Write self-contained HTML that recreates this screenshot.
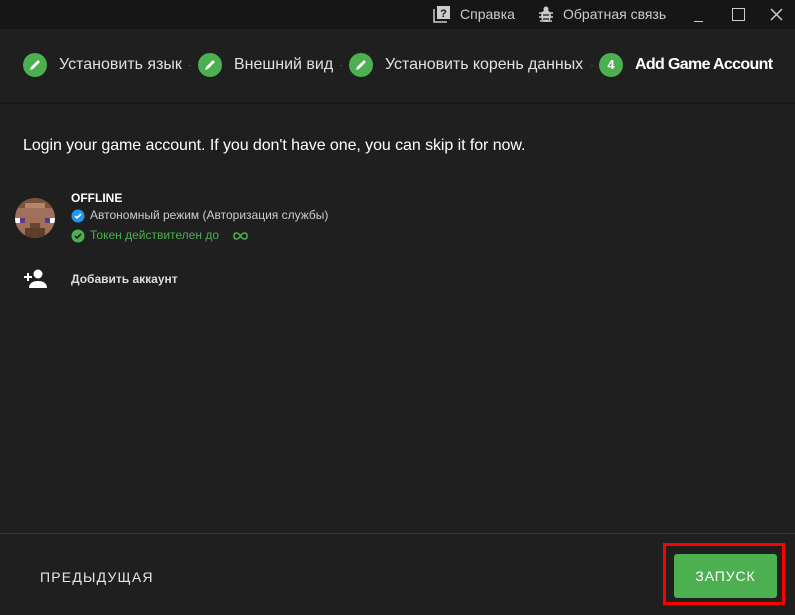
<!DOCTYPE html>
<html><head><meta charset="utf-8"><style>
*{margin:0;padding:0;box-sizing:border-box}
body{width:795px;height:615px;background:#1f1f1f;font-family:"Liberation Sans",sans-serif;color:#ddd;position:relative;overflow:hidden}
.tb{position:absolute;left:0;top:0;width:795px;height:29px;background:#161616}
.t{position:absolute;white-space:nowrap}
.step{position:absolute;top:53px;width:24px;height:24px;border-radius:50%;background:#4caf50;color:#fff;font-size:13px;font-weight:bold;text-align:center;line-height:24px}
.sl{position:absolute;top:56px;font-size:16px;color:#e0e0e0}
.dot{position:absolute;top:65px;width:2px;height:1px;background:#444}
</style></head><body>
<div class="tb">
 <svg class="t" style="left:433px;top:6px" width="17" height="17" viewBox="0 0 17 17"><path d="M1 3v13h13" stroke="#ccc" stroke-width="1.5" fill="none"/><rect x="4" y="0" width="13" height="13" fill="#ccc"/><text x="10.5" y="11" font-size="11" font-weight="bold" text-anchor="middle" fill="#161616" font-family="Liberation Sans">?</text></svg>
 <div class="t" style="left:460px;top:6px;font-size:14px;color:#ccc">Справка</div>
 <svg class="t" style="left:538px;top:6px" width="16" height="17" viewBox="0 0 16 17"><ellipse cx="8" cy="10" rx="5" ry="6" fill="#ccc"/><circle cx="8" cy="3" r="2.5" fill="#ccc"/><path d="M1 7h14M1 11h14M2 15h12" stroke="#ccc" stroke-width="1.5"/><path d="M5 9h6M5 13h6" stroke="#161616" stroke-width="1.3"/></svg>
 <div class="t" style="left:563px;top:6px;font-size:14px;color:#ccc">Обратная связь</div>
 <div class="t" style="left:694px;top:21px;width:9px;height:1px;background:#ccc"></div>
 <div class="t" style="left:732px;top:8px;width:13px;height:13px;border:1.5px solid #ccc"></div>
 <svg class="t" style="left:770px;top:8px" width="13" height="13"><path d="M1 1l11 11M12 1L1 12" stroke="#ccc" stroke-width="1.5"/></svg>
</div>

<div class="step" style="left:23px"><svg width="24" height="24" viewBox="0 0 24 24"><path d="M7 17l1-3 7-7 2 2-7 7z" fill="#fff"/></svg></div>
<div class="sl" style="left:59px">Установить язык</div>
<div class="dot" style="left:189px"></div>
<div class="step" style="left:198px"><svg width="24" height="24" viewBox="0 0 24 24"><path d="M7 17l1-3 7-7 2 2-7 7z" fill="#fff"/></svg></div>
<div class="sl" style="left:234px">Внешний вид</div>
<div class="dot" style="left:340px"></div>
<div class="step" style="left:349px"><svg width="24" height="24" viewBox="0 0 24 24"><path d="M7 17l1-3 7-7 2 2-7 7z" fill="#fff"/></svg></div>
<div class="sl" style="left:385px;letter-spacing:-0.05px">Установить корень данных</div>
<div class="dot" style="left:591px"></div>
<div class="step" style="left:599px">4</div>
<div class="sl" style="left:635px;color:#fff;font-weight:bold;letter-spacing:-0.65px">Add Game Account</div>
<div class="t" style="left:0;top:102px;width:795px;height:2px;background:#181818"></div>

<div class="t" style="left:23px;top:137px;font-size:16px;color:#fff;letter-spacing:-0.07px">Login your game account. If you don't have one, you can skip it for now.</div>

<svg class="t" style="left:15px;top:198px" width="40" height="40" viewBox="0 0 8 8"><defs><clipPath id="c"><circle cx="4" cy="4" r="4"/></clipPath></defs><g clip-path="url(#c)" shape-rendering="crispEdges">
<rect width="8" height="8" fill="#a0705a"/><rect width="8" height="2" fill="#7a5238"/><rect x="2" y="1" width="4" height="1" fill="#b5846a"/>
<rect x="0" y="4" width="1" height="1" fill="#fff"/><rect x="1" y="4" width="1" height="1" fill="#5a3c8a"/><rect x="6" y="4" width="1" height="1" fill="#5a3c8a"/><rect x="7" y="4" width="1" height="1" fill="#fff"/>
<rect x="3" y="5" width="2" height="1" fill="#6a4530"/><rect x="2" y="6" width="4" height="2" fill="#5e3d2a"/></g></svg>
<div class="t" style="left:71px;top:191px;font-size:12px;font-weight:bold;color:#fff">OFFLINE</div>
<svg class="t" style="left:71px;top:209px" width="14" height="14" viewBox="0 0 14 14"><circle cx="7" cy="7" r="6.5" fill="#2196f3"/><path d="M4 7l2 2 4-4" stroke="#fff" stroke-width="1.6" fill="none"/></svg>
<div class="t" style="left:90px;top:208px;font-size:12px;color:#ccc">Автономный режим (Авторизация службы)</div>
<svg class="t" style="left:71px;top:229px" width="14" height="14" viewBox="0 0 14 14"><circle cx="7" cy="7" r="6.5" fill="#4caf50"/><path d="M4 7l2 2 4-4" stroke="#1f1f1f" stroke-width="1.6" fill="none"/></svg>
<div class="t" style="left:90px;top:228px;font-size:12px;color:#4caf50">Токен действителен до</div>
<svg class="t" style="left:232px;top:231px" width="17" height="10" viewBox="0 0 17 10"><path d="M8.5 5C6 1 2 1 2 5s4 4 6.5 0 6.5-4 6.5 0-4 4-6.5 0z" stroke="#4caf50" stroke-width="1.6" fill="none"/></svg>

<svg class="t" style="left:22px;top:268px" width="26" height="22" viewBox="0 0 26 22"><path d="M2 9h8M6 5v8" stroke="#fff" stroke-width="2"/><circle cx="16" cy="6" r="4.5" fill="#fff"/><path d="M7 20c0-5 4-7 9-7s9 2 9 7z" fill="#fff"/></svg>
<div class="t" style="left:71px;top:272px;font-size:12px;font-weight:bold;color:#ddd">Добавить аккаунт</div>

<div class="t" style="left:0;top:533px;width:795px;height:1px;background:#383838"></div>
<div class="t" style="left:40px;top:569px;font-size:14px;color:#e6e6e6;letter-spacing:1.2px">ПРЕДЫДУЩАЯ</div>
<div class="t" style="left:663px;top:543px;width:122px;height:62px;border:3px solid #f00"></div>
<div class="t" style="left:674px;top:554px;width:103px;height:44px;background:#4caf50;border-radius:3px;color:#fff;font-size:14px;text-align:center;line-height:44px;letter-spacing:0.9px">ЗАПУСК</div>
</body></html>
